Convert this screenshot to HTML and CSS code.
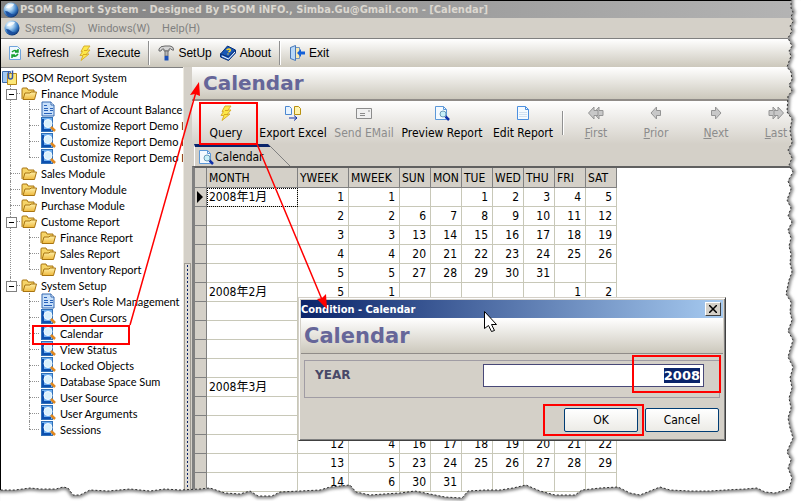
FILE: index.html
```
<!DOCTYPE html>
<html lang="en">
<head>
    <meta charset="UTF-8">
    <meta name="viewport" content="width=device-width, initial-scale=1.0">
    <title>PSOM Report System</title>
    <link rel="stylesheet" href="styles.css">
</head>
<body>
    <!-- Icons used more than once -->
    <svg class="sprite" aria-hidden="true">
        <defs>
            <radialGradient id="globeFill" cx="35%" cy="28%" r="75%">
                <stop offset="0" stop-color="#ffffff"/>
                <stop offset="0.35" stop-color="#a8d0f0"/>
                <stop offset="0.7" stop-color="#3a7cc4"/>
                <stop offset="1" stop-color="#0a3070"/>
            </radialGradient>
            <linearGradient id="folderFill" x1="0" y1="0" x2="0" y2="1">
                <stop offset="0" stop-color="#fff0a8"/>
                <stop offset="1" stop-color="#eeb83c"/>
            </linearGradient>
        </defs>
        <symbol id="globe" viewBox="0 0 16 16">
            <circle cx="8" cy="8" r="7.5" fill="url(#globeFill)"/>
            <path d="M2 9q3 0 5 2t5 1q-4 4-8 1z" fill="#1c50a0"/>
            <path d="M3 6q2-5 8-4-1 4-8 4z" fill="#ffffff" opacity=".8"/>
        </symbol>
        <symbol id="bolt" viewBox="0 0 16 16">
            <path d="M7 1h6l-3 4h3l-3.500 4h2.500l-8 6.500 2-5H3l2.500-4H4z" fill="#fde84a" stroke="#d8b030"/>
            <path d="M7 5.500h3M6 9.500h4" stroke="#d8a820"/>
        </symbol>
        <symbol id="folder" viewBox="0 0 16 16">
            <path d="M1 14V4q0-1 1-1h4l1 2h6v3" fill="#f6d468" stroke="#a87410"/>
            <path d="M2 14.500L4 8h5l1-1h5.500l-2 7.500z" fill="url(#folderFill)" stroke="#a87410"/>
        </symbol>
        <symbol id="doc" viewBox="0 0 16 16">
            <path d="M2 1h9l3 3v11H2z" fill="#c8e0fa" stroke="#3468b0"/>
            <path d="M11 1v3h3" fill="#ffffff" stroke="#3468b0"/>
            <path d="M4 4.500h3M4 7.500h4M10 7.500h3M4 9.500h4M10 9.500h3M4 12.500h8" stroke="#2860b8"/>
        </symbol>
        <symbol id="query" viewBox="0 0 16 16">
            <rect x="1.500" y=".5" width="11" height="14" fill="#70b0f0" stroke="#3070b8"/>
            <path d="M3 2v11h8" fill="none" stroke="#0c50b0" stroke-width="2"/>
            <circle cx="8" cy="6.500" r="4" fill="#d8f0fc" stroke="#f4faff"/>
            <path d="M11 10l4 4" stroke="#e08820" stroke-width="2.500"/>
        </symbol>
        <symbol id="preview" viewBox="0 0 16 16">
            <path d="M1.500 1.500h8l3 3v10h-11z" fill="#f4faff" stroke="#5c98d8"/>
            <path d="M9.500 1.500v3h3" fill="none" stroke="#5c98d8"/>
            <circle cx="9" cy="9" r="3" fill="#c8f0f8" stroke="#6c9cb8"/>
            <path d="M11.500 11.500l3.500 3.500" stroke="#1030a8" stroke-width="2.500"/>
        </symbol>
        <symbol id="arrowLeft" viewBox="0 0 11 16">
            <path d="M6 2v3.500h4v5H6V14L.5 8z" fill="#c8c8c8" stroke="#949494"/>
        </symbol>
        <symbol id="arrowRight" viewBox="0 0 11 16">
            <path d="M5 2v3.500H1v5h4V14l5.500-6z" fill="#c8c8c8" stroke="#949494"/>
        </symbol>
    </svg>

    <div class="app">
        <header class="titlebar">
            <svg class="icon"><use href="#globe"/></svg>
            <span>PSOM Report System - Designed By PSOM iNFO., Simba.Gu@Gmail.com - [Calendar]</span>
        </header>

        <nav class="menubar">
            <svg class="icon"><use href="#globe"/></svg>
            <a href="#">System(S)</a>
            <a href="#">Windows(W)</a>
            <a href="#">Help(H)</a>
        </nav>

        <div class="toolbar">
            <button type="button">
                <svg class="icon" viewBox="0 0 16 16">
                    <path d="M2.500 1.500h8l3 3v10h-11z" fill="#f0f8ff" stroke="#70a4dc"/>
                    <path d="M5 7q3-3 6 0M11 4v3H8M11 9q-3 4-6 1M5 13v-3h3" fill="none" stroke="#18a030" stroke-width="1.500"/>
                </svg>
                Refresh
            </button>
            <button type="button"><svg class="icon"><use href="#bolt"/></svg>Execute</button>
            <span class="separator"></span>
            <button type="button">
                <svg class="icon" viewBox="0 0 16 16">
                    <path d="M1 4q1-3 6-3h5q3 0 4 4h-2q-1-2-3-1v2H6V4Q4 3 3 6H1z" fill="#d4d4d4" stroke="#686868"/>
                    <path d="M7 6h3v5H7z" fill="#b8b8b8" stroke="#707070"/>
                    <path d="M6.500 11h4v4.500h-4z" fill="#1c50b8"/>
                </svg>
                SetUp
            </button>
            <button type="button">
                <svg class="icon" viewBox="0 0 16 16">
                    <path d="M.5 9l7-8 8 4-7 7z" fill="#1858b8" stroke="#083078"/>
                    <path d="M.5 9v3l8 3.500 7-7.500V5l-7 7z" fill="#2868c8" stroke="#083078"/>
                    <path d="M2 11l6.500 3L15 7" fill="none" stroke="#ffffff"/>
                    <path d="M6.500 5q3-2 4 0 0 1-2 2M7.500 9h1" fill="none" stroke="#ffd830" stroke-width="1.500"/>
                </svg>
                About
            </button>
            <span class="separator"></span>
            <button type="button">
                <svg class="icon" viewBox="0 0 16 16">
                    <path d="M1.500 2.500h9v11h-9z" fill="#f8e8b0" stroke="#7094c0"/>
                    <path d="M1.500 2.500l5-2v15l-5-2z" fill="#b8d8f8" stroke="#4878b8"/>
                    <path d="M8 8l4-4v2.500h4v3h-4V12z" fill="#1460d8"/>
                </svg>
                Exit
            </button>
        </div>

        <div class="workspace">
            <aside class="sidebar">
                <div class="node root">
                    <svg class="icon" viewBox="0 0 16 16">
                        <path d="M.5 2.500h8v11h-8z" fill="#a0c8f4" stroke="#4070b0"/>
                        <path d="M5.500 4.500h9v11h-9z" fill="#fce878" stroke="#b88818"/>
                        <path d="M6.500 2v6q0 2 2 2t2-2V1.500" fill="none" stroke="#3858a8" stroke-width="1.500"/>
                    </svg>
                    PSOM Report System
                </div>
                <ul class="tree">
                    <li class="open">
                        <div class="node"><svg class="icon"><use href="#folder"/></svg>Finance Module</div>
                        <ul>
                            <li><div class="node"><svg class="icon"><use href="#doc"/></svg>Chart of Account Balance</div></li>
                            <li><div class="node"><svg class="icon"><use href="#query"/></svg>Customize Report Demo I</div></li>
                            <li><div class="node"><svg class="icon"><use href="#query"/></svg>Customize Report Demo I</div></li>
                            <li><div class="node"><svg class="icon"><use href="#query"/></svg>Customize Report Demo I</div></li>
                        </ul>
                    </li>
                    <li><div class="node"><svg class="icon"><use href="#folder"/></svg>Sales Module</div></li>
                    <li><div class="node"><svg class="icon"><use href="#folder"/></svg>Inventory Module</div></li>
                    <li><div class="node"><svg class="icon"><use href="#folder"/></svg>Purchase Module</div></li>
                    <li class="open">
                        <div class="node"><svg class="icon"><use href="#folder"/></svg>Custome Report</div>
                        <ul>
                            <li><div class="node"><svg class="icon"><use href="#folder"/></svg>Finance Report</div></li>
                            <li><div class="node"><svg class="icon"><use href="#folder"/></svg>Sales Report</div></li>
                            <li><div class="node"><svg class="icon"><use href="#folder"/></svg>Inventory Report</div></li>
                        </ul>
                    </li>
                    <li class="open">
                        <div class="node"><svg class="icon"><use href="#folder"/></svg>System Setup</div>
                        <ul>
                            <li><div class="node"><svg class="icon"><use href="#doc"/></svg>User's Role Management</div></li>
                            <li><div class="node"><svg class="icon"><use href="#query"/></svg>Open Cursors</div></li>
                            <li><div class="node"><svg class="icon"><use href="#query"/></svg>Calendar</div></li>
                            <li><div class="node"><svg class="icon"><use href="#query"/></svg>View Status</div></li>
                            <li><div class="node"><svg class="icon"><use href="#query"/></svg>Locked Objects</div></li>
                            <li><div class="node"><svg class="icon"><use href="#query"/></svg>Database Space Sum</div></li>
                            <li><div class="node"><svg class="icon"><use href="#query"/></svg>User Source</div></li>
                            <li><div class="node"><svg class="icon"><use href="#query"/></svg>User Arguments</div></li>
                            <li><div class="node"><svg class="icon"><use href="#query"/></svg>Sessions</div></li>
                        </ul>
                    </li>
                </ul>
            </aside>

            <div class="splitter"><span class="grip"></span></div>

            <main class="content">
                <h1 class="banner">Calendar</h1>

                <div class="actions">
                    <button type="button"><svg class="icon"><use href="#bolt"/></svg>Query</button>
                    <button type="button" class="wide">
                        <svg class="icon" viewBox="0 0 16 16">
                            <path d="M.5 1.500h4l2 2v6h-6z" fill="#e8f4ff" stroke="#4c88d0"/>
                            <path d="M9.500 1.500h4l2 2v6h-6z" fill="#fff4b0" stroke="#b89010"/>
                            <path d="M4 13h8M9 10.500l3 2.500-3 2.500" fill="none" stroke="#1030a8"/>
                        </svg>
                        Export Excel
                    </button>
                    <button type="button" class="mail" disabled>
                        <svg class="icon" viewBox="0 0 16 16">
                            <path d="M.5 3.500h15v10H.5z" fill="#f0f0f0" stroke="#8c8c8c"/>
                            <path d="M4 8.500h5M4 10.500h5M12 6h2" stroke="#8c8c8c"/>
                        </svg>
                        Send EMail
                    </button>
                    <button type="button" class="widest"><svg class="icon"><use href="#preview"/></svg>Preview Report</button>
                    <button type="button" class="wide">
                        <svg class="icon" viewBox="0 0 16 16">
                            <path d="M2.500 1.500h8l3 3v10h-11z" fill="#f4faff" stroke="#4c90e0"/>
                            <path d="M10.500 1.500v3h3" fill="none" stroke="#4c90e0"/>
                            <path d="M4 7.500h8M4 9.500h8M4 11.500h8" stroke="#d0e0f0"/>
                        </svg>
                        Edit Report
                    </button>
                    <span class="separator"></span>
                    <button type="button" disabled>
                        <svg class="icon" viewBox="0 0 16 16"><use href="#arrowLeft" x="5" width="11" height="16"/><use href="#arrowLeft" width="11" height="16"/></svg>
                        <span><u>F</u>irst</span>
                    </button>
                    <button type="button" disabled><svg class="icon"><use href="#arrowLeft"/></svg><span><u>P</u>rior</span></button>
                    <button type="button" disabled><svg class="icon"><use href="#arrowRight"/></svg><span><u>N</u>ext</span></button>
                    <button type="button" disabled>
                        <svg class="icon" viewBox="0 0 16 16"><use href="#arrowRight" width="11" height="16"/><use href="#arrowRight" x="5" width="11" height="16"/></svg>
                        <span><u>L</u>ast</span>
                    </button>
                </div>

                <div class="tabs">
                    <a class="tab" href="#"><svg class="icon"><use href="#preview"/></svg>Calendar</a>
                    <svg class="tab-slope" viewBox="0 0 30 22">
                        <path d="M0 0h4l3 3H0z" fill="#0a246a"/>
                        <path d="M6 2l20 20" fill="none" stroke="#808080"/>
                    </svg>
                </div>

                <div class="grid">
                    <table>
                        <colgroup>
                            <col class="mark"><col class="month"><col class="week"><col class="week">
                            <col class="day"><col class="day"><col class="day"><col class="day"><col class="day"><col class="day"><col class="day">
                        </colgroup>
                        <thead>
                            <tr><th></th><th>MONTH</th><th>YWEEK</th><th>MWEEK</th><th>SUN</th><th>MON</th><th>TUE</th><th>WED</th><th>THU</th><th>FRI</th><th>SAT</th></tr>
                        </thead>
                        <tbody>
                            <tr class="current"><th></th><td>2008年1月</td><td>1</td><td>1</td><td></td><td></td><td>1</td><td>2</td><td>3</td><td>4</td><td>5</td></tr>
                            <tr><th></th><td></td><td>2</td><td>2</td><td>6</td><td>7</td><td>8</td><td>9</td><td>10</td><td>11</td><td>12</td></tr>
                            <tr><th></th><td></td><td>3</td><td>3</td><td>13</td><td>14</td><td>15</td><td>16</td><td>17</td><td>18</td><td>19</td></tr>
                            <tr><th></th><td></td><td>4</td><td>4</td><td>20</td><td>21</td><td>22</td><td>23</td><td>24</td><td>25</td><td>26</td></tr>
                            <tr><th></th><td></td><td>5</td><td>5</td><td>27</td><td>28</td><td>29</td><td>30</td><td>31</td><td></td><td></td></tr>
                            <tr><th></th><td>2008年2月</td><td>5</td><td>1</td><td></td><td></td><td></td><td></td><td></td><td>1</td><td>2</td></tr>
                            <!-- weeks 6 to 11 stay empty behind the condition window -->
                            <tr><th></th><td></td><td></td><td></td><td></td><td></td><td></td><td></td><td></td><td></td><td></td></tr>
                            <tr><th></th><td></td><td></td><td></td><td></td><td></td><td></td><td></td><td></td><td></td><td></td></tr>
                            <tr><th></th><td></td><td></td><td></td><td></td><td></td><td></td><td></td><td></td><td></td><td></td></tr>
                            <tr><th></th><td></td><td></td><td></td><td></td><td></td><td></td><td></td><td></td><td></td><td></td></tr>
                            <tr><th></th><td>2008年3月</td><td></td><td></td><td></td><td></td><td></td><td></td><td></td><td></td><td></td></tr>
                            <tr><th></th><td></td><td></td><td></td><td></td><td></td><td></td><td></td><td></td><td></td><td></td></tr>
                            <tr><th></th><td></td><td></td><td></td><td></td><td></td><td></td><td></td><td></td><td></td><td></td></tr>
                            <tr><th></th><td></td><td>12</td><td>4</td><td>16</td><td>17</td><td>18</td><td>19</td><td>20</td><td>21</td><td>22</td></tr>
                            <tr><th></th><td></td><td>13</td><td>5</td><td>23</td><td>24</td><td>25</td><td>26</td><td>27</td><td>28</td><td>29</td></tr>
                            <tr><th></th><td></td><td>14</td><td>6</td><td>30</td><td>31</td><td></td><td></td><td></td><td></td><td></td></tr>
                        </tbody>
                    </table>
                </div>
            </main>
        </div>
    </div>

    <form class="dialog">
        <div class="dialog-title">
            <span>Condition - Calendar</span>
            <button type="button" class="close" aria-label="Close">
                <svg viewBox="0 0 8 8"><path d="M0 0l8 8M8 0L0 8" stroke="#000000" stroke-width="1.500"/></svg>
            </button>
        </div>
        <h2 class="banner">Calendar</h2>
        <div class="field">
            <label for="year">YEAR</label>
            <input type="text" id="year" name="year" value="2008" autocomplete="off">
        </div>
        <div class="dialog-buttons">
            <button type="submit">OK</button>
            <button type="button">Cancel</button>
        </div>
    </form>

    <!-- Red call-outs, mouse pointer and torn paper edge -->
    <svg class="overlay" viewBox="0 0 801 501" preserveAspectRatio="none" aria-hidden="true">
        <defs>
            <path id="edge" d="M791 -5V8L793 12 791 17 793 22 790 26 792 31 788 38 792 46 789 51 791 56 787 67 791 72 792 80 789 85 792 91 788 96 787 112 792 119 790 130 792 143 788 150 792 158 789 165 793 172 788 181 791 189 787 200 791 208 788 216 792 222 788 230 791 238 789 246 791 254 790 263 792 272 789 280 786 294 791 302 790 312 792 320 788 331 793 340 790 350 788 357 793 367 790 378 792 388 789 398 791 408 788 418 790 428 793 438 789 447 787 452 791 460 788 468 792 478 789 489 775 493 765 492 757 488 745 489 725 490 710 491 690 491 670 490 660 487 650 491 640 495 630 493 618 487 600 488 582 490 575 495 555 495 540 491 526 485 513 488 500 490 485 490 468 491 462 498 445 497 430 494 415 491 400 493 384 494 370 495 356 492 350 485 330 487 320 490 300 491 280 492 272 496 258 496 250 491 240 494 225 493 210 488 200 489 180 490 165 489 150 491 130 489 108 491 90 490 80 495 73 495 68 488 63 487 56 489 40 489 30 488 15 490 -5 490V510H810V-5z"/>
            <clipPath id="outside"><use href="#edge"/></clipPath>
            <filter id="soft"><feGaussianBlur stdDeviation="1.5"/></filter>
        </defs>
        <g fill="none" stroke="#ff0000" stroke-width="2">
            <rect x="33" y="326" width="96" height="18"/>
            <rect x="200" y="103" width="57" height="41"/>
            <rect x="633" y="356" width="87" height="36"/>
            <rect x="544" y="405" width="99" height="30"/>
            <path d="M130 325L196 92M257 144L323 302" stroke-width="1.500"/>
        </g>
        <path d="M199 82l1 14-5-2-5 1zM327 309l-10-10 5-1 4-4z" fill="#ff0000"/>
        <path d="M484.500 311.500v17l4-3 3 6 3-1-3-6h5z" fill="#ffffff" stroke="#000000"/>
        <g clip-path="url(#outside)">
            <use href="#edge" fill="#ffffff"/>
            <use href="#edge" fill="none" stroke="#888888" stroke-width="5" filter="url(#soft)"/>
        </g>
        <use href="#edge" class="torn"/>
    </svg>

    <script>
        const year = document.getElementById('year');
        year.focus({ preventScroll: true });
        year.select();
    </script>
</body>
</html>
```
FILE: styles.css
```
* {
    box-sizing: border-box;
}
body {
    margin: 0;
    height: 100vh;
    overflow: hidden;
    position: relative;
    background-color: white;
    color: black;
    font-family: "DejaVu Sans Condensed", "Noto Sans CJK SC", sans-serif;
    font-size: 11px;
}
button {
    font-family: inherit;
    color: inherit;
    cursor: pointer;
}
a {
    color: inherit;
    text-decoration: none;
}
.sprite {
    position: absolute;
    width: 0;
    height: 0;
}
.icon {
    flex: none;
    width: 16px;
    height: 16px;
}
.app {
    display: flex;
    flex-direction: column;
    height: 100%;
    border-top: 1px solid black;
    border-left: 1px solid black;
    background-color: #d4d0c8;
}

/* Top bars */
.titlebar {
    display: flex;
    align-items: center;
    flex: none;
    gap: 1px;
    height: 17px;
    padding-left: 2px;
    background: linear-gradient(to right, #808080, #b4b4b4);
    color: #dcd8d0;
    font-weight: bold;
    white-space: nowrap;
}
.menubar {
    display: flex;
    align-items: center;
    flex: none;
    gap: 12px;
    height: 20px;
    padding-left: 3px;
    color: #808080;
    font-family: Roboto, sans-serif;
}
.menubar .icon {
    margin-right: -7px;
}
.toolbar {
    display: flex;
    align-items: center;
    flex: none;
    height: 29px;
    padding-left: 6px;
    border-top: 1px solid #808080;
    background: linear-gradient(#ffffff, #ccc8bc);
}
.toolbar button {
    display: flex;
    align-items: center;
    gap: 4px;
    padding: 0;
    margin-right: 8px;
    border: none;
    background: none;
    font-family: "Liberation Sans", sans-serif;
    font-size: 12px;
}
.separator {
    flex: none;
    width: 2px;
    height: 24px;
    margin-right: 8px;
    border-left: 1px solid #909090;
    border-right: 1px solid white;
}

/* Tree */
.workspace {
    flex: 1;
    display: flex;
    min-height: 0;
}
.sidebar {
    flex: none;
    width: 182px;
    padding: 1px 0 0 1px;
    border-top: 1px solid #808080;
    background-color: white;
    font-family: Lato, sans-serif;
    overflow: hidden;
}
.node {
    display: flex;
    align-items: center;
    gap: 4px;
    height: 16px;
    white-space: nowrap;
}
.tree,
.tree ul {
    margin: 0;
    padding: 0;
    list-style: none;
}
.tree li {
    position: relative;
    padding-left: 19px;
}
.tree li::before {
    content: "";
    position: absolute;
    left: 8px;
    top: 0;
    bottom: 0;
    border-left: 1px dotted #909090;
}
.tree li:last-child::before {
    bottom: auto;
    height: 8px;
}
.tree li::after {
    content: "";
    position: absolute;
    left: 8px;
    top: 8px;
    width: 10px;
    border-top: 1px dotted #909090;
}
.tree .open > .node::before {
    content: "";
    position: absolute;
    z-index: 1;
    left: 4px;
    top: 4px;
    width: 9px;
    height: 9px;
    border: 1px solid #808080;
    background: linear-gradient(black, black) center / 5px 1px no-repeat white;
}
.splitter {
    flex: none;
    display: flex;
    width: 9px;
    padding-top: 196px;
    border-left: 1px solid #ece9e0;
    background-color: #d4d0c8;
}
.grip {
    flex: none;
    width: 7px;
    border: 1px solid #a09c94;
    background: radial-gradient(circle, #0a246a 1px, transparent 1px) center top / 3px 4px repeat-y #e0dcd4;
}

/* Right side */
.content {
    flex: 1;
    display: flex;
    flex-direction: column;
    min-width: 0;
}
.banner {
    display: flex;
    align-items: center;
    flex: none;
    height: 34px;
    margin: 0;
    border-bottom: 2px solid #908c88;
    background: linear-gradient(#ffffff, #ccc8bc);
    color: #666699;
    font-family: "DejaVu Sans", sans-serif;
    font-size: 20px;
}
.content .banner {
    padding-left: 11px;
}
.actions {
    flex: none;
    display: flex;
    align-items: center;
    height: 43px;
    padding-left: 4px;
    background: linear-gradient(#ffffff, #d4d0c8);
    overflow: hidden;
}
.actions button {
    flex: none;
    display: flex;
    flex-direction: column;
    align-items: center;
    gap: 4px;
    width: 60px;
    padding: 0;
    border: none;
    background: none;
    font-size: 12px;
    line-height: 16px;
    white-space: nowrap;
}
.actions button:disabled {
    color: #8c8c8c;
}
.actions .wide {
    width: 74px;
}
.actions .mail {
    width: 68px;
}
.actions .widest {
    width: 88px;
}
.actions .separator {
    margin: 0 2px;
}
.tabs {
    flex: none;
    display: flex;
    height: 22px;
    margin-left: 2px;
}
.tab {
    display: flex;
    align-items: center;
    gap: 1px;
    padding-left: 3px;
    border-top: 3px solid #0a246a;
    border-left: 1px solid white;
    font-size: 12px;
}
.tab-slope {
    flex: none;
    width: 30px;
    height: 22px;
}
.grid {
    flex: 1;
    min-height: 0;
    border-top: 2px solid #606060;
    border-left: 3px solid #808080;
    background-color: white;
    overflow: hidden;
}
.grid table {
    width: 422px;
    table-layout: fixed;
    border-collapse: separate;
    border-spacing: 0;
    font-size: 12px;
}
.mark {
    width: 12px;
}
.month {
    width: 91px;
}
.week {
    width: 51px;
}
.day {
    width: 31px;
}
.grid th,
.grid td {
    height: 19px;
    padding: 0 4px 0 0;
    border-right: 1px solid #c8c8b8;
    border-bottom: 1px solid #c8c8b8;
    font-weight: normal;
    line-height: 16px;
    text-align: right;
    white-space: nowrap;
}
.grid th {
    padding: 0 0 0 2px;
    border-color: #808080;
    background-color: #d4d0c8;
    text-align: left;
}
.grid thead th {
    height: 20px;
}
.grid td:nth-child(2) {
    padding: 0 0 0 2px;
    text-align: left;
}
.grid .current td:nth-child(2) {
    outline: 1px dotted black;
    outline-offset: -1px;
}
.grid .current th::before {
    content: "";
    display: block;
    width: 6px;
    border-left: 6px solid black;
    border-top: 6px solid transparent;
    border-bottom: 6px solid transparent;
}

/* Condition window */
.dialog {
    position: absolute;
    left: 298px;
    top: 297px;
    width: 428px;
    padding: 2px;
    border: 1px solid;
    border-color: #d4d0c8 #404040 #404040 #d4d0c8;
    background-color: #d4d0c8;
    box-shadow: inset 1px 1px white, inset -1px -1px #808080;
}
.dialog-title {
    display: flex;
    align-items: center;
    justify-content: space-between;
    height: 18px;
    padding: 0 2px 0 0;
    background: linear-gradient(to right, #0a246a, #a6caf0);
    color: white;
    font-weight: bold;
}
.close {
    display: flex;
    align-items: center;
    justify-content: center;
    width: 16px;
    height: 14px;
    padding: 0;
    border: 1px solid;
    border-color: white #404040 #404040 white;
    background-color: #d4d0c8;
}
.close svg {
    width: 8px;
    height: 8px;
}
.dialog .banner {
    height: 36px;
    padding-left: 3px;
    border-bottom-width: 1px;
    font-size: 21px;
}
.field {
    display: flex;
    align-items: flex-start;
    justify-content: space-between;
    height: 38px;
    margin: 6px 3px 0;
    padding: 3px 15px 0 10px;
    border: 1px solid #a09ca4;
}
.field label {
    color: #484868;
    font-family: "DejaVu Sans", sans-serif;
    font-size: 12px;
    font-weight: bold;
    line-height: 22px;
}
.field input {
    width: 221px;
    height: 23px;
    padding: 0 3px;
    border: 1px solid #484878;
    border-radius: 0;
    outline: none;
    background-color: white;
    font-family: "DejaVu Sans", sans-serif;
    font-size: 13px;
    font-weight: bold;
    text-align: right;
}
.field input::selection {
    background-color: #0a246a;
    color: white;
}
.dialog-buttons {
    display: flex;
    justify-content: flex-end;
    gap: 7px;
    padding: 10px 4px 6px;
}
.dialog-buttons button {
    width: 74px;
    height: 24px;
    padding: 0;
    border: 1px solid #003c74;
    border-radius: 2px;
    background: linear-gradient(#ffffff, #ecebe6);
    font-size: 12px;
}

.overlay {
    position: absolute;
    left: 0;
    top: 0;
    width: 100%;
    height: 100%;
    pointer-events: none;
}
.torn {
    fill: none;
    stroke: #303030;
    stroke-dasharray: 2 2;
}
```
